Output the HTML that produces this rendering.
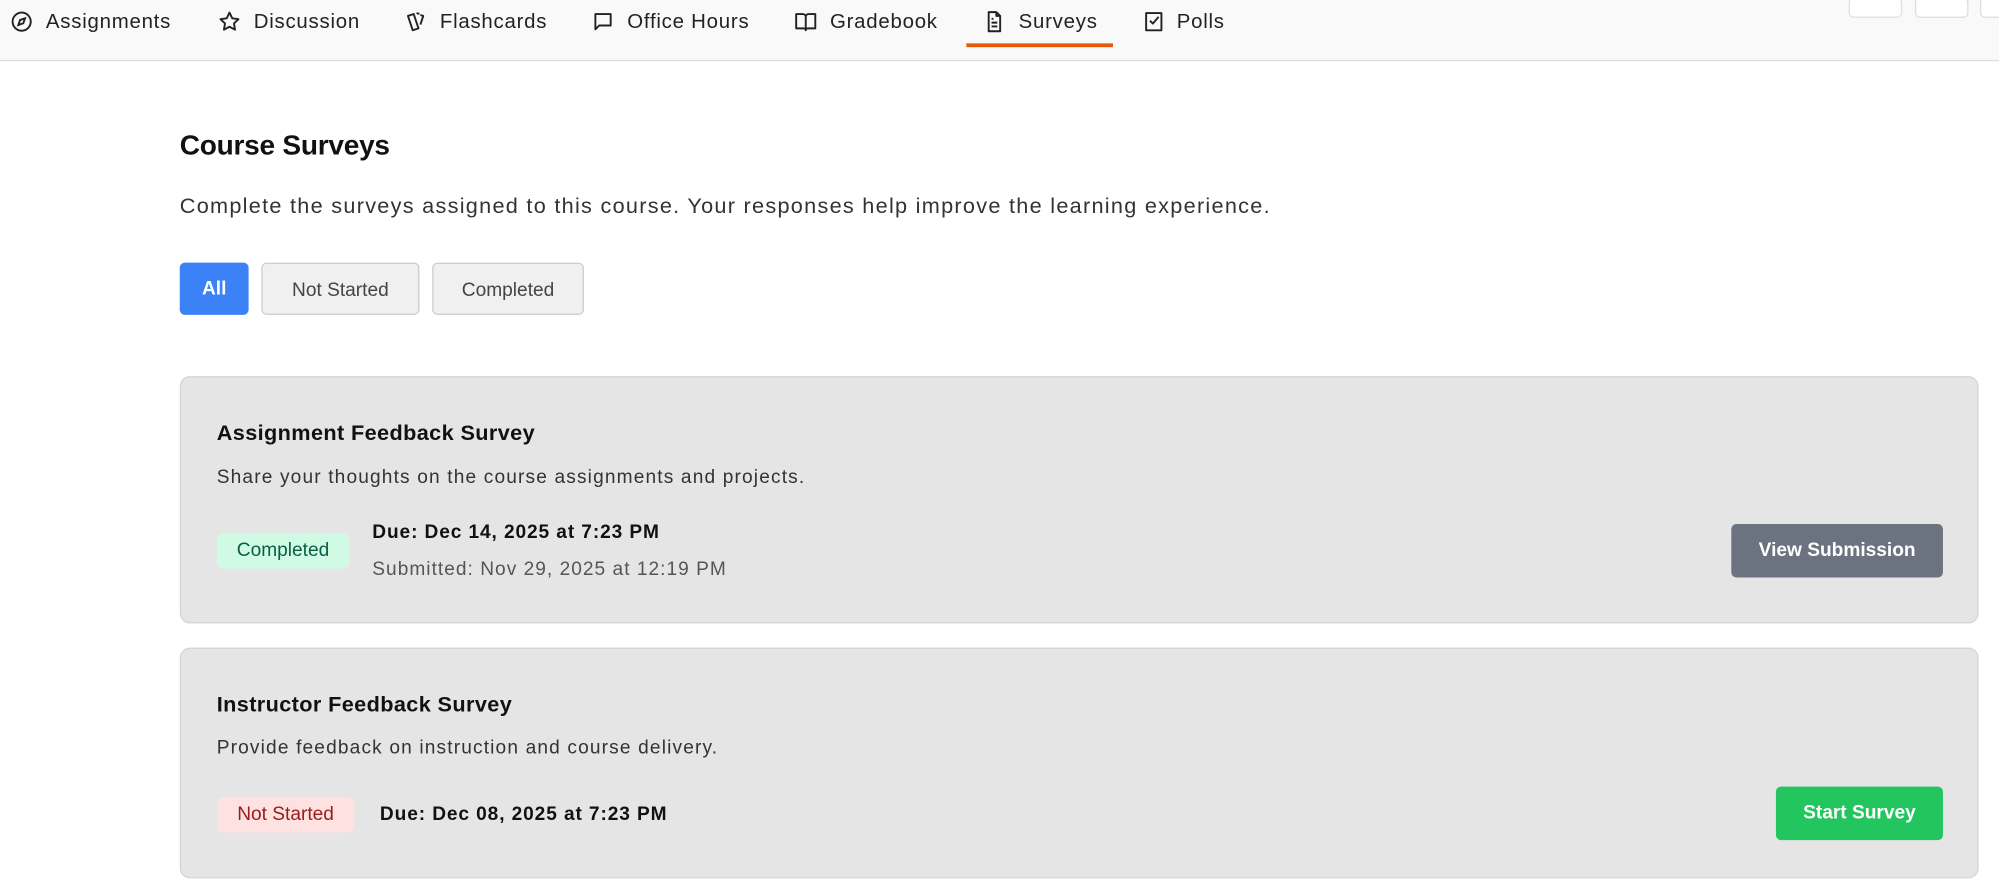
<!DOCTYPE html>
<html><head><meta charset="utf-8"><style>
html,body{margin:0;padding:0;width:1999px;height:891px;overflow:hidden;background:#fff}
#w{position:absolute;left:0;top:0;width:1568px;height:699px;transform:scale(1.2749);transform-origin:0 0;font-family:"Liberation Sans",sans-serif;color:#111}
.nav{position:absolute;left:0;top:0;width:1568px;height:47px;background:#f9f9f9;border-bottom:1px solid #ddd}
.it{position:absolute;top:8px;font-size:16px;color:#222;line-height:20px;letter-spacing:0.6px}
.ic{position:absolute;top:8px;width:18px;height:18px}
.ul{position:absolute;left:758px;top:34px;width:115px;height:3px;background:#e8590c}
.tb{position:absolute;top:-2px;height:14px;border:1px solid #ddd;border-radius:4px;background:#fff}
.a{position:absolute;white-space:nowrap;letter-spacing:0.8px}
.b{letter-spacing:0.3px}
.btn{position:absolute;top:206px;height:41px;border-radius:4px;font-size:15px;line-height:41px;text-align:center;box-sizing:border-box}
.card{position:absolute;left:141px;width:1411px;background:#e5e5e5;border:1px solid #d4d4d4;border-radius:8px;box-sizing:border-box}
.badge{position:absolute;height:28px;line-height:28px;border-radius:5px;font-size:15px;text-align:center}
.act{position:absolute;height:42px;line-height:42px;border-radius:4px;color:#fff;font-size:15px;font-weight:bold;text-align:center}
</style></head><body><div id="w">
<div class="nav">
<svg class="ic" style="left:8px" viewBox="0 0 24 24" fill="none" stroke="#222" stroke-width="2"><circle cx="12" cy="12" r="9.5"/><path d="M15.5 8.5l-1.8 5.2-5.2 1.8 1.8-5.2z"/></svg><span class="it" style="left:36px">Assignments</span>
<svg class="ic" style="left:171px" viewBox="0 0 24 24" fill="none" stroke="#222" stroke-width="2" stroke-linejoin="round"><path d="M12 2.5l2.9 6 6.5.9-4.7 4.5 1.1 6.5L12 17.3l-5.8 3.1 1.1-6.5L2.6 9.4l6.5-.9z"/></svg><span class="it" style="left:199px">Discussion</span>
<svg class="ic" style="left:317px" viewBox="0 0 24 24" fill="none" stroke="#222" stroke-width="2" stroke-linejoin="round"><path d="M4 6l6-2 5 15-6 2z"/><path d="M13 3l3 1M17 5l3 1-3 9"/></svg><span class="it" style="left:345px">Flashcards</span>
<svg class="ic" style="left:464px" viewBox="0 0 24 24" fill="none" stroke="#222" stroke-width="2" stroke-linejoin="round"><path d="M4 4h16v12H8l-4 4z"/></svg><span class="it" style="left:492px">Office Hours</span>
<svg class="ic" style="left:623px" viewBox="0 0 24 24" fill="none" stroke="#222" stroke-width="2" stroke-linejoin="round"><path d="M2 4h7a3 3 0 013 3v14a2 2 0 00-2-2H2zM22 4h-7a3 3 0 00-3 3v14a2 2 0 012-2h8z"/></svg><span class="it" style="left:651px">Gradebook</span>
<svg class="ic" style="left:771px" viewBox="0 0 24 24" fill="none" stroke="#222" stroke-width="2" stroke-linejoin="round"><path d="M14 2H6v20h12V6zM14 2v4h4M9 13h6M9 17h6M9 9h2"/></svg><span class="it" style="left:799px">Surveys</span>
<svg class="ic" style="left:896px" viewBox="0 0 24 24" fill="none" stroke="#222" stroke-width="2" stroke-linejoin="round"><path d="M4 3h16v18H4z"/><path d="M8 11l3 3 6-7"/></svg><span class="it" style="left:923px">Polls</span>
<div class="ul"></div>
<div class="tb" style="left:1450px;width:40px;border-color:#d6e0f0"></div>
<div class="tb" style="left:1502px;width:40px"></div>
<div class="tb" style="left:1553px;width:30px"></div>
</div>
<div class="a b" style="left:141px;top:100px;font-size:22px;font-weight:bold;line-height:28px;letter-spacing:-0.2px">Course Surveys</div>
<div class="a" style="left:141px;top:151px;font-size:17px;color:#333;line-height:22px;letter-spacing:1px">Complete the surveys assigned to this course. Your responses help improve the learning experience.</div>
<div class="btn" style="left:141px;width:54px;background:#3b82f6;color:#fff;font-weight:bold">All</div>
<div class="btn" style="left:205px;width:124px;background:#f0f0f0;border:1px solid #ccc;color:#444">Not Started</div>
<div class="btn" style="left:339px;width:119px;background:#f0f0f0;border:1px solid #ccc;color:#444">Completed</div>

<div class="card" style="top:295px;height:194px">
<div class="a b" style="left:28px;top:34px;font-size:17px;font-weight:bold">Assignment Feedback Survey</div>
<div class="a" style="left:28px;top:70px;font-size:15px;color:#333;letter-spacing:0.9px">Share your thoughts on the course assignments and projects.</div>
<div class="badge" style="left:28px;top:122px;width:104px;background:#d1fae5;color:#065f46">Completed</div>
<div class="a" style="left:150px;top:113px;font-size:15px;font-weight:bold;letter-spacing:0.7px">Due: Dec 14, 2025 at 7:23 PM</div>
<div class="a" style="left:150px;top:142px;font-size:15px;color:#555">Submitted: Nov 29, 2025 at 12:19 PM</div>
<div class="act" style="left:1216px;top:115px;width:166px;background:#6b7280">View Submission</div>
</div>

<div class="card" style="top:508px;height:181px">
<div class="a b" style="left:28px;top:34px;font-size:17px;font-weight:bold">Instructor Feedback Survey</div>
<div class="a" style="left:28px;top:69px;font-size:15px;color:#333;letter-spacing:0.9px">Provide feedback on instruction and course delivery.</div>
<div class="badge" style="left:28px;top:116px;width:108px;background:#fee2e2;color:#991b1b">Not Started</div>
<div class="a" style="left:156px;top:121px;font-size:15px;font-weight:bold;letter-spacing:0.7px">Due: Dec 08, 2025 at 7:23 PM</div>
<div class="act" style="left:1251px;top:108px;width:131px;background:#22c55e">Start Survey</div>
</div>
</div></body></html>
